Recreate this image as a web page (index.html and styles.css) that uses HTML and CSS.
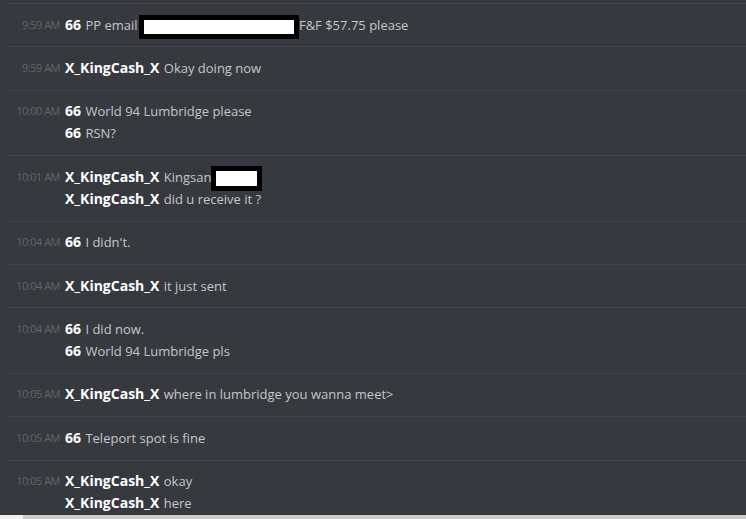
FILE: index.html
```html
<!DOCTYPE html>
<html lang="en">
<head>
    <meta charset="UTF-8">
    <title>Chat log</title>
    <link rel="stylesheet" href="styles.css">
</head>
<body>
    <div class="chat">
        <div class="group">
            <span class="time">9:59 AM</span>
            <div class="lines">
                <p><strong>66</strong> PP email <span class="redact redact-long"></span>F&amp;F $57.75 please</p>
            </div>
        </div>
        <div class="group">
            <span class="time">9:59 AM</span>
            <div class="lines">
                <p><strong>X_KingCash_X</strong> Okay doing now</p>
            </div>
        </div>
        <div class="group">
            <span class="time">10:00 AM</span>
            <div class="lines">
                <p><strong>66</strong> World 94 Lumbridge please</p>
                <p><strong>66</strong> RSN?</p>
            </div>
        </div>
        <div class="group">
            <span class="time">10:01 AM</span>
            <div class="lines">
                <p><strong>X_KingCash_X</strong> Kingsan<span class="redact redact-short"></span></p>
                <p><strong>X_KingCash_X</strong> did u receive it ?</p>
            </div>
        </div>
        <div class="group">
            <span class="time">10:04 AM</span>
            <div class="lines">
                <p><strong>66</strong> I didn't.</p>
            </div>
        </div>
        <div class="group">
            <span class="time">10:04 AM</span>
            <div class="lines">
                <p><strong>X_KingCash_X</strong> it just sent</p>
            </div>
        </div>
        <div class="group">
            <span class="time">10:04 AM</span>
            <div class="lines">
                <p><strong>66</strong> I did now.</p>
                <p><strong>66</strong> World 94 Lumbridge pls</p>
            </div>
        </div>
        <div class="group">
            <span class="time">10:05 AM</span>
            <div class="lines">
                <p><strong>X_KingCash_X</strong> where in lumbridge you wanna meet&gt;</p>
            </div>
        </div>
        <div class="group">
            <span class="time">10:05 AM</span>
            <div class="lines">
                <p><strong>66</strong> Teleport spot is fine</p>
            </div>
        </div>
        <div class="group">
            <span class="time">10:05 AM</span>
            <div class="lines">
                <p><strong>X_KingCash_X</strong> okay</p>
                <p><strong>X_KingCash_X</strong> here</p>
            </div>
        </div>
    </div>
    <div class="scrollbar">
        <div class="scroll-corner"></div>
        <div class="scroll-track"></div>
    </div>
</body>
</html>
```

FILE: styles.css
```css
body {
    margin: 0;
    height: 519px;
    display: flex;
    flex-direction: column;
    background-color: #36393e;
    font-family: "Open Sans", Arial, sans-serif;
    overflow: hidden;
}

.chat {
    flex: 1;
    overflow: hidden;
    padding: 3px 0 0 8px;
}

.group {
    display: grid;
    grid-template-columns: 52px 1fr;
    column-gap: 5px;
    border-top: 1px solid #42454b;
    padding: 9.6px 0 10.8px;
}

.time {
    font-size: 11px;
    line-height: 22px;
    height: 22px;
    color: #62656a;
    text-align: right;
    letter-spacing: -0.5px;
    white-space: nowrap;
}

.lines p {
    margin: 0;
    height: 22px;
    font-size: 13px;
    line-height: 22px;
    color: #c6c7c9;
    white-space: nowrap;
}

.lines strong {
    font-size: 14px;
    line-height: 22px;
    font-weight: 700;
    color: #ffffff;
    margin-right: 1px;
}

.redact {
    display: inline-block;
    background-color: #fff;
    border: 5px solid #000;
    vertical-align: -7px;
    margin: -2px 0;
}

.redact-long {
    width: 150px;
    height: 14px;
    margin-left: -2px;
}

.redact-short {
    width: 41px;
    height: 15px;
}

.scrollbar {
    height: 4px;
    display: flex;
}

.scroll-corner {
    width: 23px;
    background-color: #f0f0f0;
}

.scroll-track {
    flex: 1;
    background-color: #cdcdcd;
}
```
